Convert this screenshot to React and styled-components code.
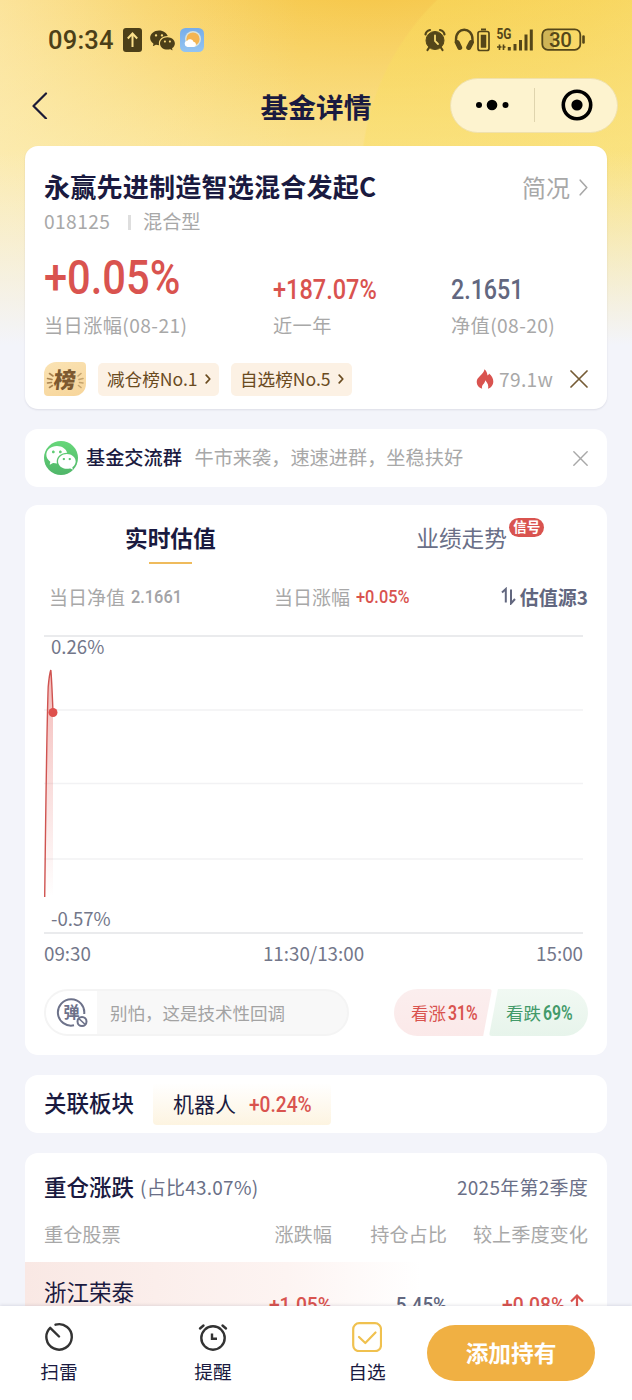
import React from "react";
import styled, { createGlobalStyle } from "styled-components";
import { RiWechatFill } from "react-icons/ri";

const holdings = [
  { name: "浙江荣泰", change: "+1.05%", ratio: "5.45%", diff: "+0.08%" },
];

const GlobalStyle = createGlobalStyle`
  * {
    box-sizing: border-box;
  }
  body {
    margin: 0;
    background: #f3f4fa;
    font-family: "Noto Sans CJK SC", "Noto Sans", sans-serif;
    color: #1a1a40;
  }
  svg {
    display: block;
    flex: none;
  }
`;

function Close({ size, color }) {
  return (
    <svg width={size} height={size} viewBox="0 0 18 18" fill="none" stroke={color} strokeWidth="1.7" strokeLinecap="round">
      <path d="M1 1L17 17M17 1L1 17" />
    </svg>
  );
}

function Chevron({ width, height, color, stroke }) {
  return (
    <svg width={width} height={height} fill="none" stroke={color} strokeWidth={stroke} strokeLinecap="round" strokeLinejoin="round">
      <path d={`M1.2 1.2L${width - 1.2} ${height / 2}L1.2 ${height - 1.2}`} />
    </svg>
  );
}

function StatusIcons() {
  return (
    <svg width="162" height="28" viewBox="424 26 162 28" fill="none">
      <g stroke="#544619">
        <circle cx="435" cy="40.500" r="9" fill="#544619" strokeWidth="1" />
        <path d="M425.500 34.500Q426 31 430 30M440 30Q444 31 444.500 34.500" strokeWidth="2.200" strokeLinecap="round" />
        <path d="M429.500 47L427.500 50M440.500 47L442.500 50" strokeWidth="2.200" strokeLinecap="round" />
        <path d="M435 35.500V41L438 44" stroke="#f9dc75" strokeWidth="1.800" strokeLinecap="round" />
        <path d="M456 43V39.500C456 26.500 472.500 26.500 472.500 39.500V43" strokeWidth="2.400" />
        <path d="M457.300 42.500L459.700 47.500M471.300 42.500L468.700 47.500" strokeWidth="5" strokeLinecap="round" />
        <rect x="478" y="31.500" width="11" height="19" rx="2" strokeWidth="1.700" />
        <path d="M481 29.500H486" strokeWidth="2" />
        <rect x="481" y="35" width="5" height="12.500" fill="#544619" strokeWidth="0.500" />
        <path d="M509.300 50.500V47M515 50.500V44M520.500 50.500V40M526 50.500V34.500M531.300 50.500V29.500" strokeWidth="3" />
        <path d="M497 47H501.500M499.500 44.500V50M505.500 47H502.500M503.500 44.500V50" strokeWidth="1.600" />
        <path d="M554 29.500H548Q542.500 29.500 542.500 35V44Q542.500 49.500 548 49.500H554Z" fill="#cfb456" stroke="none" />
        <rect x="542.300" y="29.300" width="38" height="20.500" rx="5.500" strokeWidth="1.800" />
        <path d="M583.500 36.500V42.500" strokeWidth="2.600" strokeLinecap="round" />
      </g>
      <text x="496.500" y="39" fontFamily="Roboto" fontWeight="700" fontSize="14" textLength="15" lengthAdjust="spacingAndGlyphs" fill="#544619">5G</text>
      <text x="549" y="47" fontFamily="Roboto" fontWeight="500" fontSize="20.500" textLength="23" fill="#544619">30</text>
    </svg>
  );
}

function Weather() {
  return (
    <svg width="24" height="24" viewBox="0 0 24 24">
      <defs>
        <linearGradient id="sky" x1="0" y1="0" x2="0" y2="1">
          <stop offset="0" stopColor="#77ade9" />
          <stop offset="1" stopColor="#93c4f2" />
        </linearGradient>
      </defs>
      <rect width="24" height="24" rx="5.500" fill="url(#sky)" />
      <circle cx="13" cy="11" r="8" fill="#d9e3dc" />
      <circle cx="13" cy="11" r="6.600" fill="#f3b553" />
      <path d="M7.500 19a3.200 3.200 0 0 1-.3-6.300 3.600 3.600 0 0 1 6.300 1 2.700 2.700 0 0 1 .5 5.300z" fill="#fff" />
    </svg>
  );
}

function RankBadge() {
  return (
    <Rank>
      <svg width="42" height="34" viewBox="0 0 42 34" fill="none" stroke="#a9824f" strokeWidth="1.600" strokeLinecap="round">
        <path d="M5.500 11.500L9 14M3.500 16.500L8 17.500M3.500 21L7.500 20.500M5.500 25.500L8.500 23.500" />
        <path d="M37 11.500L34 14M39 16.500L35 17.500M39 21L35.500 20.500M37 25.500L34.500 23.500" stroke="#c6a46e" />
      </svg>
      <RankChar>榜</RankChar>
    </Rank>
  );
}

function Flame() {
  return (
    <svg width="18" height="20" viewBox="0 0 18 20">
      <path
        d="M8.500 0.300C10.300 2 11.300 4 11.500 6.500C12.300 6.200 12.900 5.500 13 4.600C15.800 7 17.300 9.800 17.300 12.500C17.300 16 15.200 18.800 12 19.700C12.900 17.200 11.900 14 9.200 11.200C9 13.300 8 14.300 7 15.500C5.900 16.900 5.700 18.400 6.200 19.700C2.800 18.800 0.700 16.200 0.700 12.900C0.700 10.300 2.300 8.700 4.200 6.800C6.300 4.700 8 3.200 8.500 0.300Z"
        fill="#d9534f"
      />
    </svg>
  );
}

function Chart() {
  return (
    <ChartBox>
      <svg width="540" height="300" viewBox="0 0 540 300" fill="none">
        <defs>
          <linearGradient id="area" x1="0" y1="34" x2="0" y2="262" gradientUnits="userSpaceOnUse">
            <stop offset="0" stopColor="#e8736f" stopOpacity="0.500" />
            <stop offset="1" stopColor="#e8736f" stopOpacity="0" />
          </linearGradient>
        </defs>
        <path d="M0 1H539M0 298H539" stroke="#e4e5e8" strokeWidth="1.700" />
        <path d="M0 75H539M0 148.500H539M0 224H539" stroke="#f2f2f4" strokeWidth="1.600" />
        <path d="M0.700 262C2 200 3 90 4.500 50Q5.500 38 7 35L9 77V262Z" fill="url(#area)" />
        <path d="M0.700 262C1.500 200 2.500 100 4.200 52Q5.300 39 6.800 35Q7.500 40 9 77" stroke="#cf5350" strokeWidth="1.400" />
        <circle cx="9" cy="77.500" r="4.500" fill="#de4f4c" />
      </svg>
      <ChartLabel $top={-1}>0.26%</ChartLabel>
      <ChartLabel $top={271}>-0.57%</ChartLabel>
    </ChartBox>
  );
}

function App() {
  return (
    <>
      <GlobalStyle />
      <Page>
        <Scroll>
          <StatusBar>
            <Clock>09:34</Clock>
            <svg width="19" height="24" viewBox="0 0 19 24" fill="none">
              <rect width="19" height="24" rx="3" fill="#4c3f18" />
              <path d="M9.500 19V6M4.800 10.500L9.500 5.500L14.200 10.500" stroke="#fbe08a" strokeWidth="2" />
            </svg>
            <StatusChat>
              <RiWechatFill size={27} />
            </StatusChat>
            <Weather />
            <Spacer />
            <StatusIcons />
          </StatusBar>
          <Nav>
            <svg width="16" height="28" viewBox="0 0 16 28" fill="none" stroke="#1b1a36" strokeWidth="2.200" strokeLinecap="round" strokeLinejoin="round">
              <path d="M14 2.500L1.500 15L14 27.500" />
            </svg>
            <NavTitle>基金详情</NavTitle>
            <Capsule>
              <svg width="34" height="12" viewBox="0 0 34 12">
                <circle cx="4" cy="6" r="3" />
                <circle cx="17" cy="6" r="5.300" />
                <circle cx="30.500" cy="6" r="3" />
              </svg>
              <CapsuleLine />
              <svg width="32" height="32" viewBox="0 0 32 32">
                <circle cx="16" cy="16" r="13.700" fill="none" stroke="#000" strokeWidth="3.600" />
                <circle cx="16" cy="16" r="5.600" />
              </svg>
            </Capsule>
          </Nav>

          <Summary>
            <Row $h={40}>
              <FundName>永赢先进制造智选混合发起C</FundName>
              <Spacer />
              <Brief>简况</Brief>
              <Chevron width={9} height={17} color="#a8a8a8" stroke={1.6} />
            </Row>
            <Row $h={30}>
              <Code>018125</Code>
              <CodeLine />
              <Muted>混合型</Muted>
            </Row>
            <Stats>
              <Stat>
                <Figure>
                  <Num $size={49} $scale={0.85} $weight={500} $up={2}>+0.05%</Num>
                </Figure>
                <StatLabel>当日涨幅(08-21)</StatLabel>
              </Stat>
              <Stat>
                <Figure>
                  <Num $size={28} $scale={0.84} $weight={500}>+187.07%</Num>
                </Figure>
                <StatLabel>近一年</StatLabel>
              </Stat>
              <Stat>
                <Figure>
                  <Num $size={28} $scale={0.83} $weight={500} $color="#62677f">2.1651</Num>
                </Figure>
                <StatLabel>净值(08-20)</StatLabel>
              </Stat>
            </Stats>
            <Tags>
              <RankBadge />
              <Tag>
                减仓榜No.1
                <Chevron width={6} height={10} color="#6a4b1f" stroke={1.7} />
              </Tag>
              <Tag>
                自选榜No.5
                <Chevron width={6} height={10} color="#6a4b1f" stroke={1.7} />
              </Tag>
              <Spacer />
              <Flame />
              <Heat>79.1w</Heat>
              <Close size={18} color="#755b35" />
            </Tags>
          </Summary>

          <Group>
            <GroupIcon>
              <RiWechatFill size={32} />
            </GroupIcon>
            <GroupName>基金交流群</GroupName>
            <GroupText>牛市来袭，速速进群，坐稳扶好</GroupText>
            <Spacer />
            <Close size={15} color="#a8a8a8" />
          </Group>

          <Valuation>
            <Tabs>
              <Tab $active>实时估值</Tab>
              <Tab>
                业绩走势
                <Signal>信号</Signal>
              </Tab>
            </Tabs>
            <Info>
              <span>当日净值</span>
              <Num $size={19} $scale={0.86} $weight={500} $color="#a3a3a6">2.1661</Num>
              <span>当日涨幅</span>
              <Num $size={19} $scale={0.86} $weight={500}>+0.05%</Num>
              <Source>
                <svg width="15" height="18" viewBox="0 0 15 18" fill="none" stroke="#62677f" strokeWidth="2">
                  <path d="M1 5.500L4.800 2V15.500M10 2.500V16.500L14 12" />
                </svg>
                估值源3
              </Source>
            </Info>
            <Chart />
            <Axis>
              <span>09:30</span>
              <span>11:30/13:00</span>
              <span>15:00</span>
            </Axis>
            <Row $h={47}>
              <Comment>
                <CommentIcon>
                  <svg width="34" height="32" viewBox="0 0 34 32" fill="none" stroke="#6d728a">
                    <path d="M19 28.300A13.200 13.200 0 1 1 29.200 17" strokeWidth="2" />
                    <circle cx="27" cy="24.500" r="4.500" strokeWidth="2" />
                    <path d="M23.800 21.500L30.200 27.500" strokeWidth="1.700" />
                    <text x="8.500" y="21" fontSize="16" fontWeight="700" fill="#6d728a" stroke="none">弹</text>
                  </svg>
                </CommentIcon>
                别怕，这是技术性回调
              </Comment>
              <Spacer />
              <Vote $up>
                看涨<Num $size={20} $scale={0.79} $weight={600}>31%</Num>
              </Vote>
              <Vote>
                看跌<Num $size={20} $scale={0.79} $weight={600} $color="#439a69">69%</Num>
              </Vote>
            </Row>
          </Valuation>

          <Sector>
            <Heading>关联板块</Heading>
            <SectorChip>
              机器人
              <Num $size={21.5} $scale={0.89} $weight={500}>+0.24%</Num>
            </SectorChip>
          </Sector>

          <Holdings>
            <HoldingsHead>
              <Heading>重仓涨跌</Heading>
              <Sub>(占比43.07%)</Sub>
              <Spacer />
              <Sub>2025年第2季度</Sub>
            </HoldingsHead>
            <Columns>
              <span>重仓股票</span>
              <span>涨跌幅</span>
              <span>持仓占比</span>
              <span>较上季度变化</span>
            </Columns>
            {holdings.map((item) => (
              <Stock key={item.name}>
                <StockName>{item.name}</StockName>
                <Num $size={20.5} $scale={0.94} $weight={500} $right>{item.change}</Num>
                <Num $size={20.5} $scale={0.92} $weight={500} $right $color="#62677f">{item.ratio}</Num>
                <Diff>
                  <Num $size={20.5} $scale={0.94} $weight={500} $right>{item.diff}</Num>
                  <svg width="16" height="20" viewBox="0 0 16 20" fill="none" stroke="#d9534f" strokeWidth="2.200">
                    <path d="M8 20V2.500M2 8.500L8 2.500L14 8.500" />
                  </svg>
                </Diff>
              </Stock>
            ))}
          </Holdings>
        </Scroll>

        <BottomBar>
          <Action>
            <svg width="30" height="30" viewBox="0 0 30 30" fill="none" stroke="#333" strokeWidth="2.400" strokeLinecap="round" strokeLinejoin="round">
              <path d="M11.500 2.700A12.700 12.700 0 1 1 6.200 5.800L15 14.500" />
            </svg>
            扫雷
          </Action>
          <Action>
            <svg width="30" height="30" viewBox="0 0 30 30" fill="none" stroke="#333" strokeWidth="2.400" strokeLinecap="round">
              <circle cx="15" cy="16" r="11.700" />
              <path d="M2 6.500L5.500 3.500M28 6.500L24.500 3.500" />
              <path d="M14 11.500V16.800H19" strokeLinecap="butt" />
            </svg>
            提醒
          </Action>
          <Action>
            <svg width="30" height="30" viewBox="0 0 30 30" fill="none" stroke="#f0c14f" strokeWidth="2.200" strokeLinecap="round" strokeLinejoin="round">
              <rect x="1.200" y="1.200" width="27.800" height="28" rx="6" />
              <path d="M7 15L13.300 21L23.500 10.500" />
            </svg>
            自选
          </Action>
          <AddButton>添加持有</AddButton>
        </BottomBar>
      </Page>
    </>
  );
}

const Page = styled.div`
  width: 632px;
  height: 1400px;
  display: flex;
  flex-direction: column;
  overflow: hidden;
`;

const Scroll = styled.main`
  flex: 1;
  min-height: 0;
  overflow: hidden;
  background:
    linear-gradient(to bottom, rgba(243, 244, 250, 0) 150px, #f3f4fa 345px),
    linear-gradient(to right, rgba(255, 242, 210, 0.35), rgba(255, 242, 210, 0) 300px),
    radial-gradient(circle at 612px 180px, rgba(249, 222, 96, 0.4) 250px, rgba(249, 222, 96, 0) 252px),
    linear-gradient(to bottom, rgba(252, 234, 166, 0) 0, rgba(251, 233, 160, 0.75) 150px),
    radial-gradient(circle at 370px -40px, #f6c74a 0, #f8d160 230px, #fae08a 440px);
  background-color: #f3f4fa;
`;

const Spacer = styled.div`
  flex: 1;
`;

const StatusBar = styled.header`
  height: 78px;
  padding: 2px 46px 0 48px;
  display: flex;
  align-items: center;
`;

const Clock = styled.span`
  width: 75px;
  font-family: Roboto, sans-serif;
  font-weight: 500;
  font-size: 25.5px;
  letter-spacing: 0.2px;
  color: #4c3f18;
`;

const StatusChat = styled.span`
  margin: 0 6px 0 7px;
  width: 25px;
  color: #4c3f18;
`;

const Nav = styled.nav`
  height: 54px;
  padding: 0 14px 0 32px;
  display: flex;
  align-items: center;
  justify-content: space-between;
`;

const NavTitle = styled.h1`
  margin: 2px 0 0 134px;
  font-size: 27.7px;
  line-height: 40px;
  font-weight: 700;
`;

const Capsule = styled.div`
  width: 168px;
  height: 55px;
  padding: 0 24px;
  flex: none;
  display: flex;
  align-items: center;
  justify-content: space-between;
  border: 1px solid #f0e1ad;
  border-radius: 28px;
  background: #fdf3cf;
`;

const CapsuleLine = styled.i`
  width: 1px;
  height: 34px;
  background: #dfd4ae;
`;

const Card = styled.section`
  margin: 0 25px;
  border-radius: 13px;
  background: #fff;
`;

const Row = styled.div`
  height: ${(p) => p.$h}px;
  display: flex;
  align-items: center;
`;

/* condensed figures, red unless a colour is given */
const Num = styled.span`
  display: inline-block;
  font-family: Roboto, sans-serif;
  font-size: ${(p) => p.$size}px;
  font-weight: ${(p) => p.$weight};
  line-height: 1;
  color: ${(p) => p.$color || "#d9534f"};
  white-space: nowrap;
  transform: scaleX(${(p) => p.$scale});
  transform-origin: ${(p) => (p.$right ? "right" : "left")} center;
  margin-bottom: ${(p) => p.$up || 0}px;
`;

const Muted = styled.span`
  font-size: 19.2px;
  line-height: 28px;
  padding-bottom: 2px;
  color: #a8a8a8;
`;

const Summary = styled(Card)`
  height: 263px;
  margin-top: 14px;
  padding: 21px 19px 0;
  box-shadow: 0 1px 2px rgba(60, 60, 90, 0.12);
`;

const FundName = styled.h2`
  margin: 0 0 2px;
  font-size: 26.1px;
  letter-spacing: 0.15px;
  font-weight: 700;
`;

const Brief = styled.span`
  margin: 0 9px 2px 0;
  font-size: 24px;
  color: #a8a8a8;
`;

const Code = styled(Muted)`
  width: 84px;
  letter-spacing: 0.4px;
`;

const CodeLine = styled.i`
  width: 3px;
  height: 15px;
  margin-right: 12px;
  background: #dedede;
`;

const Stats = styled.div`
  display: grid;
  grid-template-columns: 229px 178px 1fr;
  height: 102px;
`;

const Stat = styled.div`
  display: flex;
  flex-direction: column;
`;

const StatLabel = styled(Muted)`
  letter-spacing: 0.4px;
`;

const Figure = styled.div`
  height: 74px;
  display: flex;
  align-items: flex-end;
  padding-bottom: 7px;
`;

const Tags = styled.div`
  height: 34px;
  margin-top: 23px;
  display: flex;
  align-items: center;
`;

const Rank = styled.div`
  position: relative;
  width: 42px;
  height: 34px;
  border-radius: 12px 4px 12px 4px;
  background: linear-gradient(160deg, #fae3b4, #f7d59a);
`;

const RankChar = styled.b`
  position: absolute;
  left: 10px;
  top: 4px;
  font-size: 22px;
  line-height: 24px;
  font-weight: 900;
  color: #7d5930;
  transform: skewX(-6deg);
`;

const Tag = styled.div`
  width: 121px;
  height: 33px;
  margin-left: 12px;
  padding: 0 8px 1px 9px;
  display: flex;
  align-items: center;
  justify-content: space-between;
  border-radius: 5px;
  background: #fcf1e4;
  font-size: 17.6px;
  color: #6a4b1f;
`;

const Heat = styled(Muted)`
  width: 76px;
  padding: 0 0 0 5px;
  letter-spacing: 0.3px;
`;

const Group = styled(Card)`
  height: 58px;
  margin-top: 20px;
  padding: 0 19px;
  display: flex;
  align-items: center;
`;

const GroupIcon = styled.div`
  width: 34px;
  height: 34px;
  margin-right: 8px;
  display: grid;
  place-items: center;
  border-radius: 50%;
  background: linear-gradient(#67d77a, #50b669);
  color: #fff;
`;

const GroupName = styled.span`
  width: 109px;
  padding-bottom: 2px;
  font-size: 19.2px;
  font-weight: 500;
`;

const GroupText = styled(Muted)`
  margin-left: -0.5px;
`;

const Valuation = styled(Card)`
  height: 550px;
  margin-top: 18px;
  padding: 0 19px;
`;

const Tabs = styled.div`
  height: 70px;
  padding: 16px 64px 0 81px;
  display: flex;
  justify-content: space-between;
`;

const Tab = styled.div`
  position: relative;
  height: 42px;
  font-size: 22.7px;
  line-height: 34px;
  font-weight: ${(p) => (p.$active ? 700 : 400)};
  color: ${(p) => (p.$active ? "#1a1a40" : "#6a6f87")};
  ${(p) =>
    p.$active &&
    `&::after {
      content: "";
      position: absolute;
      left: 24px;
      bottom: -1px;
      width: 43px;
      height: 2.5px;
      background: #efbb5c;
    }`}
  &:last-child {
    margin-right: 17px;
  }
`;

const Signal = styled.span`
  position: absolute;
  left: 93px;
  top: -3px;
  width: 35px;
  height: 19px;
  border-radius: 10px;
  background: #d9534f;
  color: #fff;
  font-size: 13.5px;
  line-height: 17px;
  font-weight: 700;
  text-align: center;
`;

const Info = styled.div`
  height: 44px;
  padding: 0 0 2px 5px;
  display: grid;
  grid-template-columns: 82px 143px 82px 1fr auto;
  align-items: center;
  font-size: 19px;
  color: #a8a8a8;
  > ${Num} {
    margin-top: 1px;
  }
`;

const Source = styled.div`
  display: flex;
  align-items: center;
  gap: 4px;
  font-weight: 700;
  color: #62677f;
`;

const ChartBox = styled.div`
  position: relative;
  height: 300px;
  margin-top: 16px;
`;

const ChartLabel = styled.span`
  position: absolute;
  left: 7px;
  top: ${(p) => p.$top}px;
  font-size: 18.6px;
  line-height: 24px;
  color: #73778a;
`;

const Axis = styled.div`
  height: 54px;
  padding: 5px 5px 0 0;
  display: flex;
  justify-content: space-between;
  font-size: 18.8px;
  line-height: 26px;
  color: #73778a;
`;

const Comment = styled.div`
  width: 305px;
  height: 47px;
  display: flex;
  align-items: center;
  border: 2px solid #f4f4f4;
  border-radius: 24px;
  background: #f8f8f8;
  overflow: hidden;
  font-size: 17.5px;
  color: #a3a3a3;
`;

const CommentIcon = styled.div`
  width: 51px;
  height: 100%;
  margin-right: 13px;
  display: grid;
  place-items: center;
  background: #fff;
`;

const Vote = styled.div`
  width: ${(p) => (p.$up ? 98 : 99)}px;
  height: 47px;
  margin-left: ${(p) => (p.$up ? 0 : -3)}px;
  padding-left: 17px;
  display: flex;
  align-items: center;
  gap: 2px;
  font-size: 17.5px;
  color: ${(p) => (p.$up ? "#d9534f" : "#439a69")};
  border-radius: ${(p) => (p.$up ? "24px 3px 3px 24px" : "3px 24px 24px 3px")};
  background: ${(p) => (p.$up ? "linear-gradient(#fbeeee, #fbe9e9)" : "linear-gradient(#f1f9f3, #e7f4eb)")};
  clip-path: ${(p) => (p.$up ? "polygon(0 0, 100% 0, 91% 100%, 0 100%)" : "polygon(9% 0, 100% 0, 100% 100%, 0 100%)")};
`;

const Sector = styled(Card)`
  height: 58px;
  margin-top: 20px;
  padding: 0 19px;
  display: flex;
  align-items: center;
`;

const Heading = styled.h3`
  margin: 0;
  padding-bottom: 4px;
  font-size: 22.5px;
  line-height: 34px;
  font-weight: 500;
`;

const SectorChip = styled.div`
  width: 178px;
  height: 42px;
  margin-left: 19px;
  padding: 0 0 2px 20px;
  display: flex;
  align-items: center;
  gap: 13px;
  border-radius: 4px;
  background: linear-gradient(#fff, #fdf4e1);
  font-size: 21px;
  ${Num} {
    margin-top: 4px;
  }
`;

const Holdings = styled(Card)`
  height: 260px;
  margin-top: 20px;
`;

const HoldingsHead = styled.div`
  height: 58px;
  padding: 12px 19px 0;
  display: flex;
  align-items: center;
`;

const Sub = styled.span`
  margin-left: 6px;
  padding-bottom: 4px;
  font-size: 19px;
  letter-spacing: 0.25px;
  color: #6a6f87;
`;

const Columns = styled.div`
  height: 51px;
  padding: 0 19px 6px;
  display: grid;
  grid-template-columns: 170px 118px 115px 1fr;
  align-items: center;
  font-size: 19.2px;
  color: #a8a8a8;
  span:not(:first-child) {
    text-align: right;
  }
`;

const Stock = styled.div`
  height: 100px;
  padding: 0 19px;
  display: grid;
  grid-template-columns: 170px 118px 115px 1fr;
  align-items: start;
  background: linear-gradient(to right, #f9e8e4, #fdf4f2 45%, #fff 68%);
  > ${Num} {
    margin-top: 33px;
    text-align: right;
  }
`;

const StockName = styled.span`
  padding-top: 12px;
  font-size: 22.5px;
  line-height: 34px;
`;

const Diff = styled.div`
  display: flex;
  align-items: flex-start;
  justify-content: flex-end;
  gap: 4px;
  padding: 31px 3px 0 0;
  ${Num} {
    margin-top: 2px;
  }
`;

const BottomBar = styled.footer`
  position: relative;
  height: 94px;
  padding: 0 37px 0 32px;
  display: flex;
  background: #fff;
  box-shadow: 0 -1px 3px rgba(50, 50, 80, 0.12);
`;

const Action = styled.div`
  width: 54px;
  margin-right: 100px;
  padding-top: 16px;
  flex: none;
  display: flex;
  flex-direction: column;
  align-items: center;
  gap: 5px;
  font-size: 18.7px;
  line-height: 28px;
  &:nth-child(3) {
    margin-right: 33px;
  }
`;

const AddButton = styled.button`
  width: 168px;
  height: 56px;
  margin-top: 19px;
  padding: 0 0 2px;
  flex: none;
  border: none;
  border-radius: 28px;
  background: #f0b043;
  color: #fff;
  font-family: inherit;
  font-size: 22.7px;
  font-weight: 700;
`;

export default App;
